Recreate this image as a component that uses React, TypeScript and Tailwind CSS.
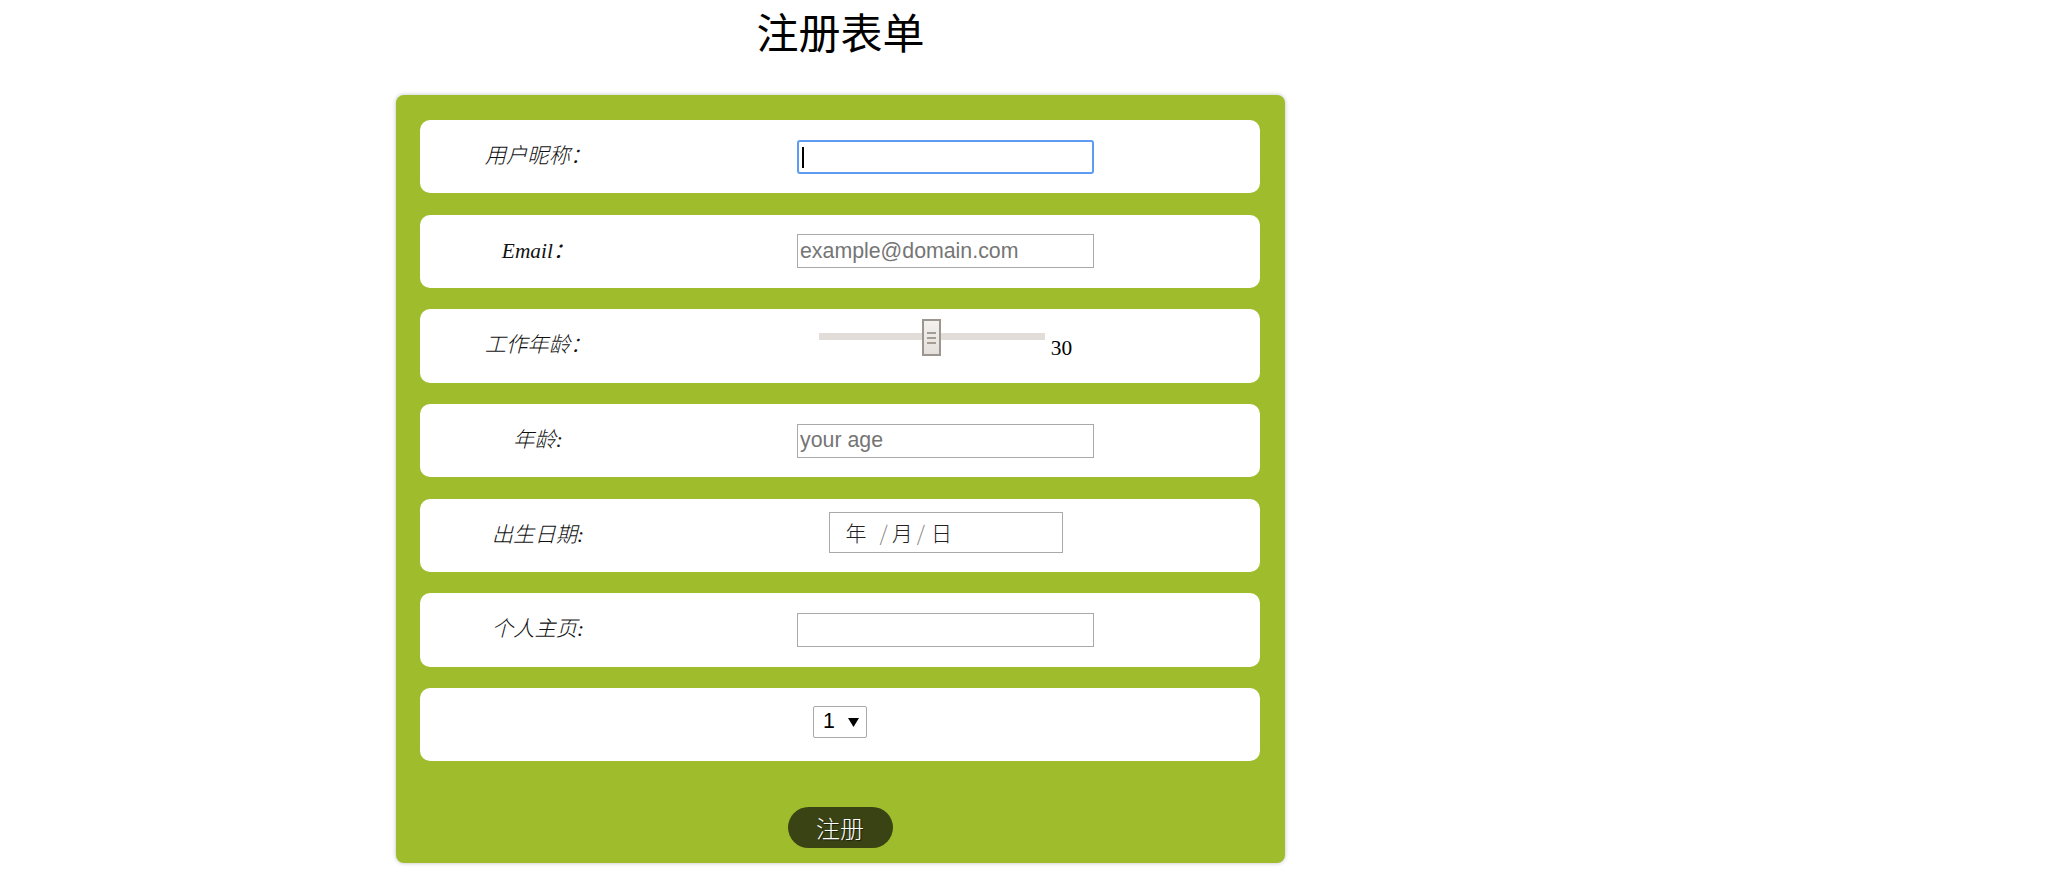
import React from "react";

const labelCls =
  "w-[236px] shrink-0 text-center italic font-light text-[21.33px] leading-none text-[#111] font-['Liberation_Serif','Noto_Sans_CJK_SC',serif]";
const fieldCls = "w-[579px] shrink-0 flex justify-center items-center";
const inputCls =
  "w-[297px] h-[34px] border border-[#a9a9a9] bg-white px-[2px] text-[21.33px] text-black font-['Liberation_Sans',sans-serif] placeholder:text-[#757575] outline-none";

function Row({ children }: { children: React.ReactNode }) {
  return <div className="h-[73.33px] bg-white rounded-[10px] flex items-center">{children}</div>;
}

function Slider() {
  return (
    <div className="flex items-end -mt-[16px]">
      <div className="relative w-[226px] h-[37px]">
        <div className="absolute left-0 right-0 top-[14px] h-[7px] bg-[#e2ddd8]" />
        <div className="absolute left-[103px] top-0 w-[19px] h-[37px] border-2 border-[#9c968e] bg-gradient-to-b from-[#f3f1ee] to-[#e4e0db] flex flex-col items-center justify-center gap-[3px]">
          <span className="block w-[9px] h-[2px] bg-[#a39d95]" />
          <span className="block w-[9px] h-[2px] bg-[#a39d95]" />
          <span className="block w-[9px] h-[2px] bg-[#a39d95]" />
        </div>
      </div>
      <span className="ml-[6px] -mb-[3px] text-[21.33px] leading-none text-black font-['Liberation_Serif',serif]">30</span>
    </div>
  );
}

export default function App() {
  return (
    <div className="min-h-screen bg-white">
      <div className="ml-[396px] w-[889px]">
        <h1 className="pt-[10px] text-center text-[42px] leading-[42px] font-normal text-black font-['Noto_Sans_CJK_SC',sans-serif]">
          注册表单
        </h1>
        <form
          className="mt-[43px] bg-[#9ebc2c] rounded-[8px] shadow-[0_0_4px_rgba(0,0,0,0.25)] pl-[24px] pr-[25px] pt-[25px] pb-[15px] flex flex-col"
          onSubmit={(e) => e.preventDefault()}
        >
          <div className="flex flex-col gap-[21.33px]">
            <Row>
              <span className={labelCls}>用户昵称：</span>
              <div className={fieldCls}>
                <div className="relative">
                  <input
                    type="text"
                    className="w-[297px] h-[34px] border-2 border-[#5e9cf3] rounded-[3px] bg-white px-[2px] text-[21.33px] font-['Liberation_Sans',sans-serif] outline-none caret-transparent"
                  />
                  <span className="absolute left-[5px] top-[7px] w-[2px] h-[21px] bg-black" />
                </div>
              </div>
            </Row>
            <Row>
              <span className={`${labelCls} font-normal`}>Email：</span>
              <div className={fieldCls}>
                <input type="email" placeholder="example@domain.com" className={inputCls} />
              </div>
            </Row>
            <Row>
              <span className={labelCls}>工作年龄：</span>
              <div className={fieldCls}>
                <Slider />
              </div>
            </Row>
            <Row>
              <span className={labelCls}>年龄:</span>
              <div className={fieldCls}>
                <input type="text" placeholder="your age" className={inputCls} />
              </div>
            </Row>
            <Row>
              <span className={labelCls}>出生日期:</span>
              <div className={fieldCls}>
                <div className="-mt-[5px] w-[234px] h-[41px] border border-[#a9a9a9] flex items-center pl-[16px] text-[21px] leading-none text-[#222] font-['Noto_Sans_CJK_SC',sans-serif] font-light">
                  <span>年</span>
                  <span className="ml-[13px] text-[#888]">/</span>
                  <span className="ml-[4px]">月</span>
                  <span className="ml-[4px] text-[#888]">/</span>
                  <span className="ml-[6px]">日</span>
                </div>
              </div>
            </Row>
            <Row>
              <span className={labelCls}>个人主页:</span>
              <div className={fieldCls}>
                <input type="url" className={inputCls} />
              </div>
            </Row>
            <Row>
              <div className="w-full flex justify-center">
                <div className="-mt-[5px] w-[54px] h-[32px] border border-[#a9a9a9] rounded-[2px] flex items-center pl-[9px] text-[21.33px] leading-none text-black font-['Liberation_Sans',sans-serif]">
                  <span>1</span>
                  <svg className="ml-[13px]" width="11" height="9" viewBox="0 0 11 9">
                    <polygon points="0,0 11,0 5.5,9" fill="#000" />
                  </svg>
                </div>
              </div>
            </Row>
          </div>
          <div className="mt-[46px] flex justify-center">
            <button
              type="submit"
              className="w-[105px] h-[41px] rounded-full bg-[#3a4314] text-white text-[24px] leading-none font-['Noto_Sans_CJK_SC',sans-serif] font-light [text-shadow:1px_1px_1px_rgba(0,0,0,0.6)]"
            >
              注册
            </button>
          </div>
        </form>
      </div>
    </div>
  );
}
